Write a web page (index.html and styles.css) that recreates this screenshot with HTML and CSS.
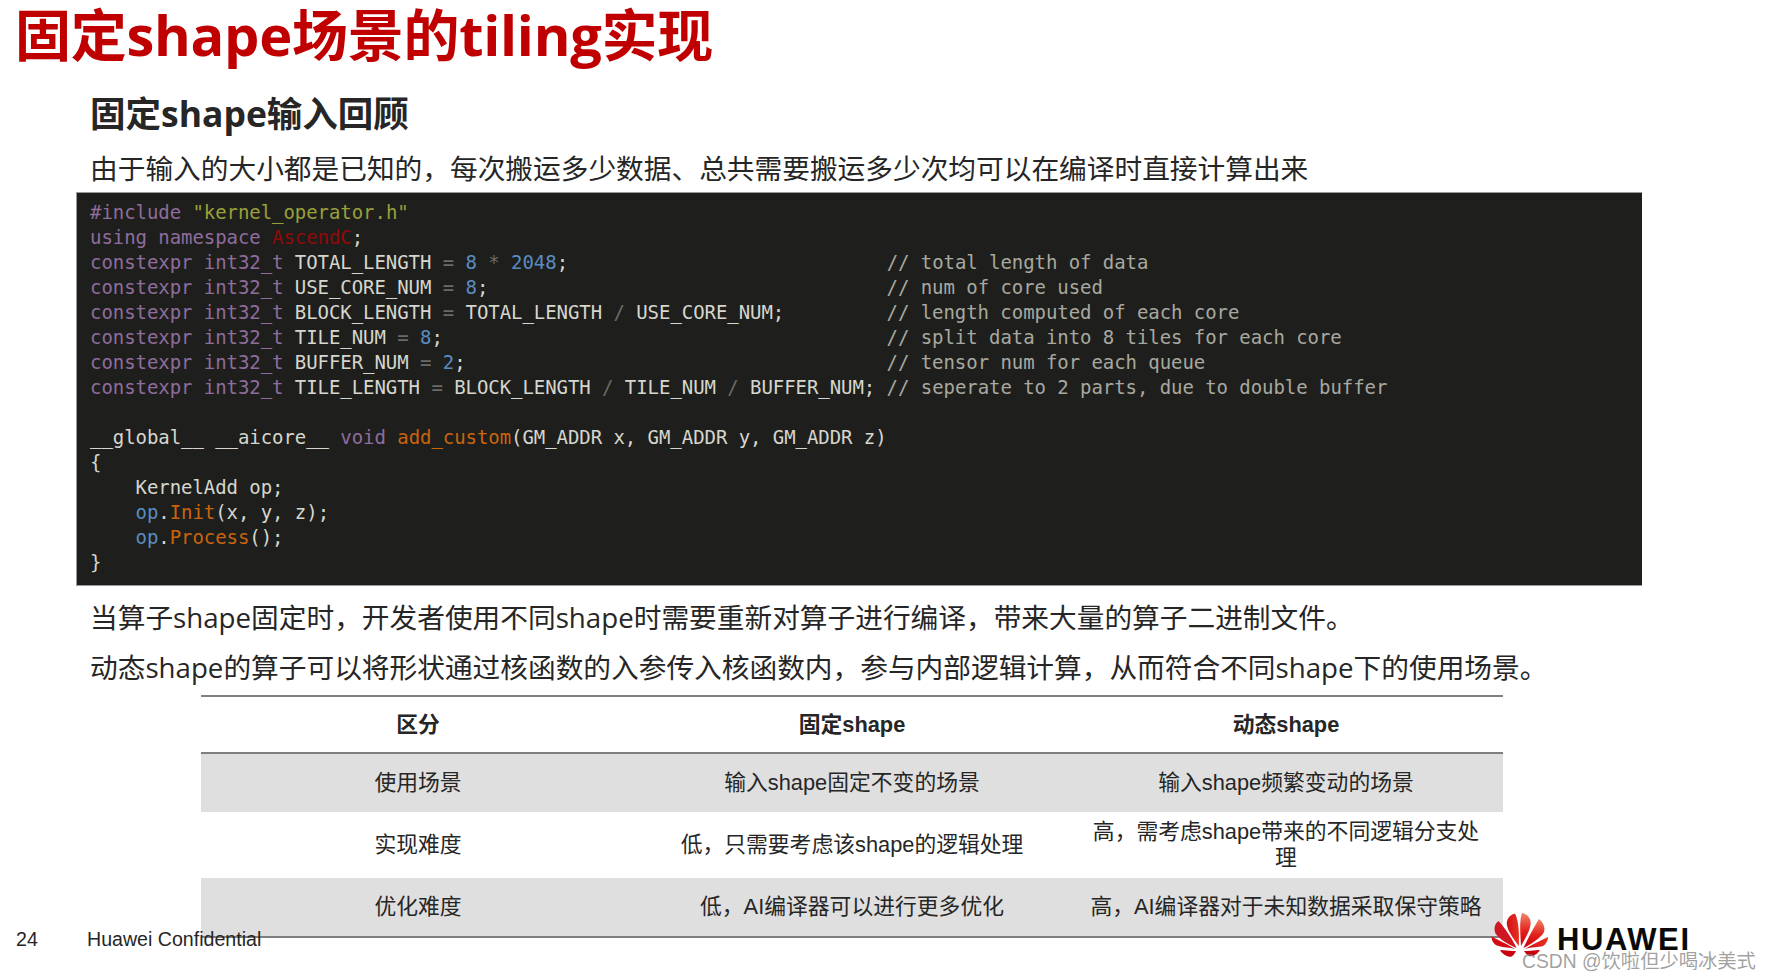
FILE: index.html
```html
<!DOCTYPE html>
<html lang="zh-CN">
<head>
<meta charset="utf-8">
<title>固定shape场景的tiling实现</title>
<link rel="stylesheet" href="styles.css">
</head>
<body>
<main class="slide">
  <h1 class="title">固定shape场景的tiling实现</h1>
  <section class="content">
    <h2 class="subtitle">固定shape输入回顾</h2>
    <p class="lead">由于输入的大小都是已知的，每次搬运多少数据、总共需要搬运多少次均可以在编译时直接计算出来</p>
    <pre class="code"><span class="k">#include</span> <span class="s">"kernel_operator.h"</span>
<span class="k">using namespace</span> <span class="r">AscendC</span>;
<span class="k">constexpr int32_t</span> TOTAL_LENGTH <span class="o">=</span> <span class="n">8</span> <span class="o">*</span> <span class="n">2048</span>;                            <span class="c">// total length of data</span>
<span class="k">constexpr int32_t</span> USE_CORE_NUM <span class="o">=</span> <span class="n">8</span>;                                   <span class="c">// num of core used</span>
<span class="k">constexpr int32_t</span> BLOCK_LENGTH <span class="o">=</span> TOTAL_LENGTH <span class="o">/</span> USE_CORE_NUM;         <span class="c">// length computed of each core</span>
<span class="k">constexpr int32_t</span> TILE_NUM <span class="o">=</span> <span class="n">8</span>;                                       <span class="c">// split data into 8 tiles for each core</span>
<span class="k">constexpr int32_t</span> BUFFER_NUM <span class="o">=</span> <span class="n">2</span>;                                     <span class="c">// tensor num for each queue</span>
<span class="k">constexpr int32_t</span> TILE_LENGTH <span class="o">=</span> BLOCK_LENGTH <span class="o">/</span> TILE_NUM <span class="o">/</span> BUFFER_NUM; <span class="c">// seperate to 2 parts, due to double buffer</span>

__global__ __aicore__ <span class="k">void</span> <span class="f">add_custom</span>(GM_ADDR x, GM_ADDR y, GM_ADDR z)
{
    KernelAdd op;
    <span class="n">op</span>.<span class="f">Init</span>(x, y, z);
    <span class="n">op</span>.<span class="f">Process</span>();
}</pre>
    <p class="para">当算子shape固定时，开发者使用不同shape时需要重新对算子进行编译，带来大量的算子二进制文件。</p>
    <p class="para">动态shape的算子可以将形状通过核函数的入参传入核函数内，参与内部逻辑计算，从而符合不同shape下的使用场景。</p>
    <table class="compare">
      <thead>
        <tr><th>区分</th><th>固定shape</th><th>动态shape</th></tr>
      </thead>
      <tbody>
        <tr class="shaded"><td>使用场景</td><td>输入shape固定不变的场景</td><td>输入shape频繁变动的场景</td></tr>
        <tr class="tall"><td>实现难度</td><td>低，只需要考虑该shape的逻辑处理</td><td>高，需考虑shape带来的不同逻辑分支处理</td></tr>
        <tr class="shaded"><td>优化难度</td><td>低，AI编译器可以进行更多优化</td><td>高，AI编译器对于未知数据采取保守策略</td></tr>
      </tbody>
    </table>
  </section>
</main>
<div class="page-no">24</div>
<div class="confidential">Huawei Confidential</div>
<div class="brand">
  <svg class="petals" viewBox="0 0 58 45" width="58" height="45" aria-hidden="true">
    <defs>
      <linearGradient id="pg" x1="0" y1="0" x2="0" y2="1">
        <stop offset="0" stop-color="#f0876a"/>
        <stop offset="0.55" stop-color="#e3201b"/>
        <stop offset="1" stop-color="#c8000b"/>
      </linearGradient>
      <linearGradient id="pd" x1="0" y1="0" x2="1" y2="0">
        <stop offset="0" stop-color="#d01019"/>
        <stop offset="1" stop-color="#e8301f"/>
      </linearGradient>
    </defs>
    <path fill="url(#pg)" d="M31 0C37 1 40.500 6 39.500 12C38.800 18 34 26 30 33C29.500 22 28 8 31 0Z"/>
    <path fill="url(#pd)" d="M24 0.500C18 2 15 7 16 12.500C17 18.500 23.500 27 27.800 33C28.300 22 28 8 24 0.500Z"/>
    <path fill="url(#pg)" d="M48 6C52 9 54.500 14 53 19C50 25 40 31 32.500 35C36 27 43 14 48 6Z"/>
    <path fill="#cf1722" d="M7.500 8C3.500 11 2.500 16 4.500 20.500C8 26 18 32 25.500 35C22 27 14 15 7.500 8Z"/>
    <path fill="url(#pd)" d="M57 24C57 28.500 54 33 50 33.500C45 34.500 38 34.500 34 36C40 32 49 28 57 24Z"/>
    <path fill="#d40c14" d="M0.500 23.500C0.500 28 3 32 7.500 33C13 34.500 19 34.500 24 36C18 32 8 27.500 0.500 23.500Z"/>
    <path fill="#c8000b" d="M33 38C37 38 43 37.500 49 37C46.500 41.500 41 44 38 43C36 42 34.500 40 33 38Z"/>
    <path fill="#c8000b" d="M25 38C21 38 15 37.500 9 37C11.500 41.500 17 44.500 20.500 43.500C22.500 42.500 24 40 25 38Z"/>
  </svg>
  <span class="wordmark">HUAWEI</span>
</div>
<div class="watermark">CSDN @饮啦但少喝冰美式</div>
</body>
</html>
```

FILE: styles.css
```css
* { box-sizing: border-box; }
html, body { margin: 0; padding: 0; background: #fff; }
body {
  width: 1769px;
  height: 980px;
  overflow: hidden;
  position: relative;
  color: #262626;
  font-family: "Open Sans", "Noto Sans CJK SC", sans-serif;
}
.slide { display: flex; flex-direction: column; }
.title {
  margin: 0 0 0 15px;
  font-size: 56px;
  line-height: 68px;
  font-weight: 700;
  color: #c00000;
  letter-spacing: -0.28px;
}
.content { display: flex; flex-direction: column; margin-left: 76px; width: 1566px; }
.subtitle {
  margin: 23px 0 0 14px;
  font-size: 35.5px;
  line-height: 44px;
  font-weight: 700;
}
.lead, .para {
  margin: 0 0 0 14px;
  font-size: 27.7px;
  line-height: 44px;
  font-weight: 400;
}
.lead { margin-top: 11px; height: 46px; }
.para { height: 50px; }
.code {
  margin: 0 0 9px;
  height: 394px;
  padding: 7px 13px 0;
  background: #1e1f1c;
  border: 1px solid #9a9a98;
  border-width: 1px 0 1px 1px;
  color: #d6d6ce;
  font-family: "DejaVu Sans Mono", monospace;
  font-size: 19px;
  letter-spacing: -0.06px;
  line-height: 25px;
  white-space: pre;
}
.k { color: #8e6c9c; }
.s { color: #99a03a; }
.r { color: #8f0a0a; }
.n { color: #5a8cc0; }
.o { color: #6b6b66; }
.c { color: #a8a8a0; }
.f { color: #c9640e; }
.compare {
  margin: 0 0 0 125px;
  width: 1302px;
  border-collapse: separate;
  border-spacing: 0;
  table-layout: fixed;
  border-top: 2px solid #7f7f7f;
  border-bottom: 2px solid #7f7f7f;
  font-family: "Liberation Sans", "Noto Sans CJK SC", sans-serif;
  font-size: 21.8px;
  line-height: 26px;
  text-align: center;
}
.compare th {
  height: 57px;
  font-weight: 700;
  border-bottom: 2px solid #7f7f7f;
}
.compare td { height: 58px; padding: 0 20px; }
.compare .tall td { height: 66px; }
.shaded { background: #dfdfdf; }
.page-no, .confidential {
  position: absolute;
  top: 927px;
  font-family: "Liberation Sans", sans-serif;
  font-size: 19.6px;
  line-height: 24px;
}
.page-no { left: 16px; }
.confidential { left: 87px; }
.brand {
  position: absolute;
  left: 1491px;
  top: 913px;
  display: flex;
  align-items: flex-start;
  gap: 8px;
}
.wordmark {
  margin-top: 9px;
  font-family: "Liberation Sans", sans-serif;
  font-weight: 700;
  font-size: 31px;
  line-height: 36px;
  letter-spacing: 1.6px;
  color: #0a0a0a;
}
.watermark {
  position: absolute;
  left: 1522px;
  top: 949px;
  font-family: "Liberation Sans", "Noto Sans CJK SC", sans-serif;
  font-size: 19.3px;
  line-height: 26px;
  color: rgba(130, 130, 130, 0.75);
  white-space: nowrap;
}
```
